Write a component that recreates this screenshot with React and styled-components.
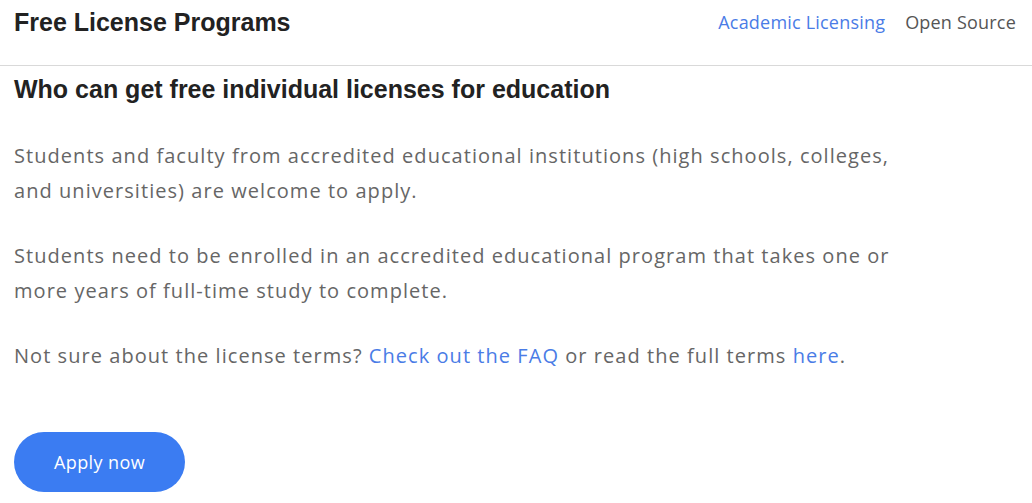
import React from "react";
import styled, { createGlobalStyle } from "styled-components";

const GlobalStyle = createGlobalStyle`
  body {
    margin: 0;
    background: #fff;
    font-family: "Open Sans", "Noto Sans", sans-serif;
  }
`;

const App = () => {
  return (
    <>
      <GlobalStyle />
      <Page>
        <Header>
          <Title>Free License Programs</Title>
          <Nav>
            <NavLink href="#" active>Academic Licensing</NavLink>
            <NavLink href="#">Open Source</NavLink>
          </Nav>
        </Header>
        <Content>
          <SectionTitle>Who can get free individual licenses for education</SectionTitle>
          <Text>
            Students and faculty from accredited educational institutions (high schools, colleges,
            and universities) are welcome to apply.
          </Text>
          <Text>
            Students need to be enrolled in an accredited educational program that takes one or
            more years of full-time study to complete.
          </Text>
          <Text>
            Not sure about the license terms? <Link href="#">Check out the FAQ</Link> or read the
            full terms <Link href="#">here</Link>.
          </Text>
          <ApplyButton>Apply now</ApplyButton>
        </Content>
      </Page>
    </>
  );
};

export default App;

const Page = styled.div`
  width: 1032px;
`;

const Header = styled.header`
  display: flex;
  justify-content: space-between;
  align-items: flex-start;
  height: 66px;
  box-sizing: border-box;
  padding: 7px 16px 0 14px;
  border-bottom: 1px solid #d9d9d9;
`;

const Title = styled.h1`
  margin: 0;
  font-family: "Liberation Sans", Arial, sans-serif;
  font-size: 25px;
  font-weight: bold;
  color: #222;
  line-height: 30px;
`;

const Nav = styled.nav`
  display: flex;
  gap: 20px;
  padding-top: 2px;
`;

const NavLink = styled.a`
  font-size: 18px;
  line-height: 26px;
  letter-spacing: 0.2px;
  text-decoration: none;
  color: ${(p) => (p.active ? "#4a7ce6" : "#555")};
`;

const Content = styled.main`
  padding: 8px 14px 0 14px;
`;

const SectionTitle = styled.h2`
  margin: 0 0 34px 0;
  font-family: "Liberation Sans", Arial, sans-serif;
  font-size: 25px;
  font-weight: bold;
  color: #222;
  line-height: 30px;
`;

const Text = styled.p`
  margin: 0 0 30px 0;
  max-width: 900px;
  font-size: 20px;
  line-height: 35px;
  letter-spacing: 1.05px;
  color: #666;
`;

const Link = styled.a`
  color: #4a7ce6;
  text-decoration: none;
`;

const ApplyButton = styled.button`
  margin-top: 29px;
  width: 171px;
  height: 60px;
  border: none;
  border-radius: 30px;
  background: #3b7cf2;
  color: #fff;
  font-family: "Open Sans", "Noto Sans", sans-serif;
  font-size: 18px;
  letter-spacing: 0.4px;
  cursor: pointer;
`;
